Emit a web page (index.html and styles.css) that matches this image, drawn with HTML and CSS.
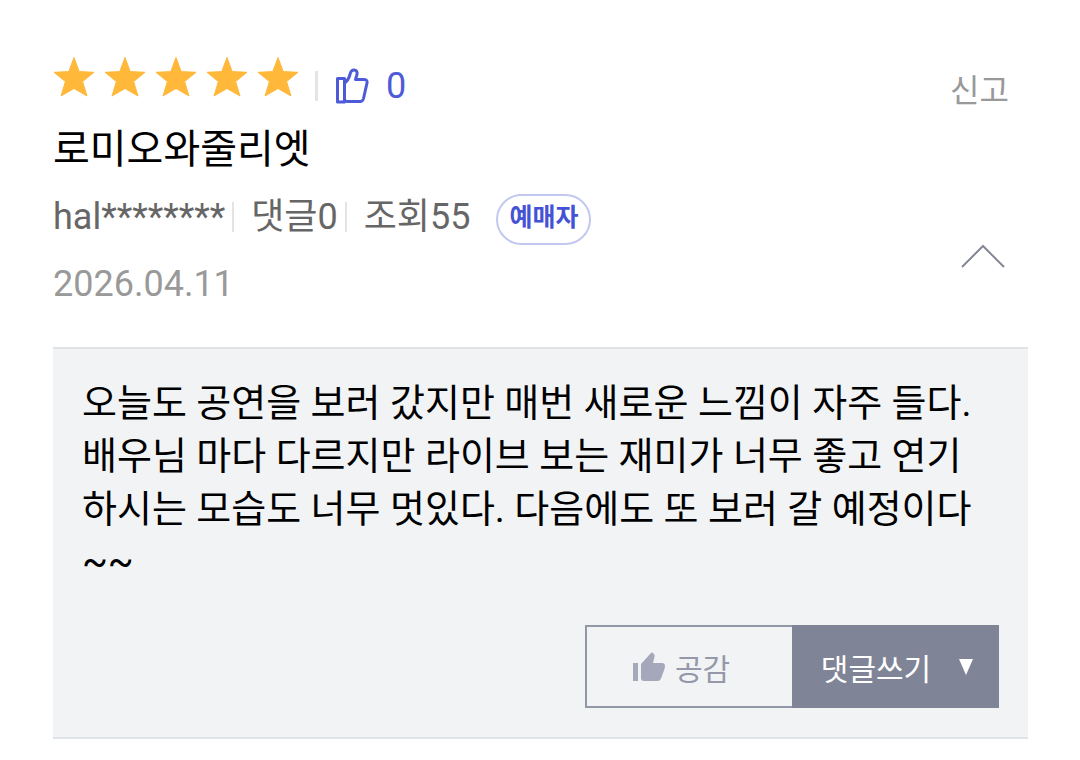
FILE: index.html
```
<!DOCTYPE html>
<html lang="ko">
<head>
    <meta charset="UTF-8">
    <meta name="viewport" content="width=device-width, initial-scale=1.0">
    <title>로미오와줄리엣</title>
    <link rel="stylesheet" href="styles.css">
</head>
<body>
    <svg class="defs" aria-hidden="true">
        <symbol id="star" viewBox="0 0 42 42">
            <path d="M21 1.5 L26.2 15.6 L41 16.3 L29.6 25.6 L34 40 L21 32.5 L8 40 L12.4 25.6 L1 16.3 L15.8 15.6 Z"/>
        </symbol>
    </svg>

    <article class="review">
        <header class="review-header">
            <div class="info">
                <div class="rating">
                    <div class="stars" role="img" aria-label="별점 5점">
                        <svg><use href="#star"/></svg>
                        <svg><use href="#star"/></svg>
                        <svg><use href="#star"/></svg>
                        <svg><use href="#star"/></svg>
                        <svg><use href="#star"/></svg>
                    </div>
                    <div class="likes">
                        <svg class="like-icon" viewBox="0 0 34 36" aria-hidden="true">
                            <path d="M2.500 10.500 H9.500 V34 H2.500 Z"/>
                            <path d="M9.500 15 C12.500 13 14 10 15 6.500 C15.500 4 16.500 2 19 2 C21.500 2 22.500 4 22 6.500 L20.500 11.500 H29.500 C31.500 11.500 32.500 13 32 15 L28.500 30.500 C28 32.500 27 33.500 25 33.500 H12.500 C10.500 33.500 10 33 9.500 32"/>
                        </svg>
                        <span>0</span>
                    </div>
                </div>
                <h1 class="title">로미오와줄리엣</h1>
                <div class="meta">
                    <span>hal********</span>
                    <span class="meta-item">댓글0</span>
                    <span class="meta-item">조회55</span>
                    <span class="badge">예매자</span>
                </div>
                <time class="date" datetime="2026-04-11">2026.04.11</time>
            </div>
            <div class="side">
                <button type="button" class="report">신고</button>
                <button type="button" class="toggle" aria-label="접기">
                    <svg viewBox="0 0 46 26"><path d="M2 24 L23 3 L44 24"/></svg>
                </button>
            </div>
        </header>

        <section class="content">
            <p>오늘도 공연을 보러 갔지만 매번 새로운 느낌이 자주 들다. 배우님 마다 다르지만 라이브 보는 재미가 너무 좋고 연기하시는 모습도 너무 멋있다. 다음에도 또 보러 갈 예정이다~~</p>
            <div class="actions">
                <button type="button" class="btn btn-like">
                    <svg viewBox="0 0 32 29" aria-hidden="true">
                        <path d="M0 11 H5 V29 H0 Z"/>
                        <path d="M8 12 L18 1 Q19 0 20 1 L21 2 Q22 3 21.500 5 L20 11 H29 Q32 11 32 14 L31.500 17 L28 26.500 Q27 29 24.500 29 H11 Q8 29 8 26 Z"/>
                    </svg>
                    공감
                </button>
                <button type="button" class="btn btn-comment">
                    댓글쓰기
                    <svg viewBox="0 0 14 16" aria-hidden="true"><path d="M0 0 H14 L7 16 Z"/></svg>
                </button>
            </div>
        </section>
    </article>
</body>
</html>
```
FILE: styles.css
```
* {
    box-sizing: border-box;
}
body {
    margin: 0;
    background: #fff;
    color: #000;
    font-family: Roboto, "Noto Sans CJK KR", sans-serif;
}
button {
    padding: 0;
    border: none;
    background: none;
    font-family: inherit;
    cursor: pointer;
}
.defs {
    position: absolute;
    width: 0;
    height: 0;
}
.review {
    padding: 56px 52px 20px 53px;
}
.review-header {
    display: flex;
    justify-content: space-between;
    padding-bottom: 32px;
}
.rating {
    display: flex;
    height: 63px;
}
.stars {
    display: flex;
    gap: 9px;
}
.stars svg {
    width: 42px;
    height: 42px;
    fill: #ffb83a;
    stroke: #ffb83a;
    stroke-width: 1;
    stroke-linejoin: round;
}
.likes {
    display: flex;
    align-items: center;
    gap: 17px;
    height: 60px;
    color: #4e5bd8;
    font-size: 36px;
}
.likes::before {
    content: "";
    width: 3px;
    height: 30px;
    margin-left: 16px;
    background: #e4e4e4;
}
.like-icon {
    width: 34px;
    height: 36px;
    fill: none;
    stroke: #4e5bd8;
    stroke-width: 3;
    stroke-linejoin: round;
}
.title {
    margin: 0;
    font-size: 40px;
    font-weight: 400;
    line-height: 62px;
}
.meta {
    display: flex;
    align-items: center;
    color: #666;
    font-size: 36px;
    line-height: 72px;
}
.meta-item {
    display: flex;
    align-items: center;
}
.meta-item::before {
    content: "";
    width: 2px;
    height: 30px;
    margin: 0 17px 0 7px;
    background: #e4e4e4;
}
.badge {
    height: 51px;
    margin: 4px 0 0 26px;
    padding: 0 11px;
    border: 2px solid #c3c8f0;
    border-radius: 26px;
    color: #4552d6;
    font-size: 25px;
    font-weight: 700;
    line-height: 44px;
}
.date {
    display: block;
    color: #999;
    font-size: 36px;
    line-height: 62px;
}
.side {
    display: flex;
    flex-direction: column;
    align-items: flex-end;
    gap: 127px;
    padding: 10px 19px 0 0;
}
.report {
    color: #999;
    font-size: 32px;
    line-height: 50px;
}
.toggle {
    display: flex;
    margin-right: 3px;
}
.toggle svg {
    width: 46px;
    height: 26px;
    fill: none;
    stroke: #858894;
    stroke-width: 2;
}
.content {
    padding: 28px 29px 29px;
    border-top: 2px solid #e2e3e6;
    border-bottom: 2px solid #e1e3eb;
    background: #f2f3f5;
}
.content p {
    margin: 0 0 36px;
    padding-right: 20px;
    font-size: 38px;
    line-height: 53px;
    word-break: break-all;
}
.actions {
    display: flex;
    justify-content: flex-end;
}
.btn {
    display: flex;
    align-items: center;
    justify-content: center;
    width: 207px;
    height: 83px;
    font-size: 30px;
}
.btn-like {
    gap: 10px;
    padding-right: 16px;
    border: 2px solid #9398a6;
    border-right: none;
    color: #9598a8;
}
.btn-like svg {
    width: 32px;
    height: 29px;
    fill: #a5a8ba;
}
.btn-comment {
    gap: 28px;
    padding-left: 3px;
    background: #808497;
    color: #fff;
}
.btn-comment svg {
    width: 14px;
    height: 16px;
    fill: #fff;
}
```
